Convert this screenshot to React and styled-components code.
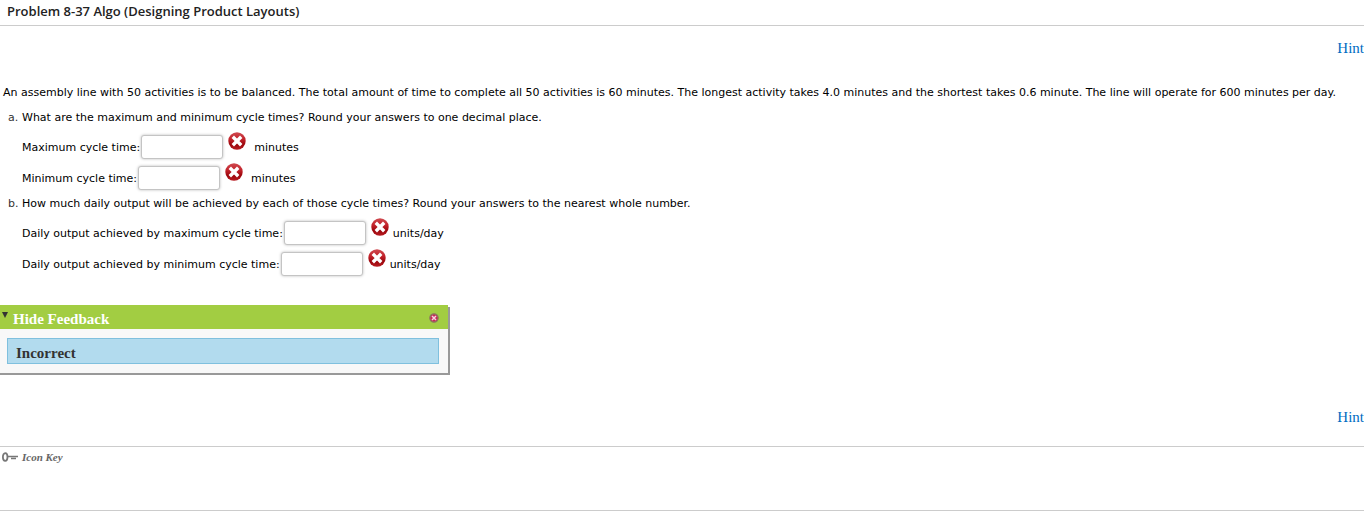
import React from "react";
import styled, { createGlobalStyle } from "styled-components";

const GlobalStyle = createGlobalStyle`
  * {
    box-sizing: border-box;
  }
  body {
    margin: 0;
    background: #fff;
    color: #000;
    font-family: "DejaVu Sans", Verdana, sans-serif;
    font-size: 11px;
    line-height: 16px;
  }
`;

const cycleParts = [
  { id: "max-cycle", label: "Maximum cycle time:", unit: "minutes", wide: true },
  { id: "min-cycle", label: "Minimum cycle time:", unit: "minutes", wide: true },
];

const outputParts = [
  { id: "max-output", label: "Daily output achieved by maximum cycle time:", unit: "units/day" },
  { id: "min-output", label: "Daily output achieved by minimum cycle time:", unit: "units/day" },
];

function WrongIcon() {
  return (
    <WrongMark viewBox="0 0 18 18" role="img" aria-label="Incorrect answer">
      <defs>
        <linearGradient id="wrong-fill" x1="0" y1="0" x2="0" y2="1">
          <stop offset="0" stopColor="#cf4a50" />
          <stop offset="0.4" stopColor="#c2222a" />
          <stop offset="0.7" stopColor="#9c060c" />
          <stop offset="1" stopColor="#b81c22" />
        </linearGradient>
      </defs>
      <circle cx="9" cy="9" r="8.7" fill="url(#wrong-fill)" />
      <path
        d="M6 6 12 12M12 6 6 12"
        stroke="#fff"
        strokeWidth="3.4"
        strokeLinecap="square"
      />
    </WrongMark>
  );
}

function KeyIcon() {
  return (
    <svg width="16" height="10" viewBox="0 0 16 10" aria-hidden="true">
      <ellipse cx="3.2" cy="5" rx="2.3" ry="3.8" fill="none" stroke="#777" strokeWidth="1.8" />
      <path d="M5 4.5H16M9 6.5H14" stroke="#777" strokeWidth="1.4" />
    </svg>
  );
}

function Question({ mark, text, parts }) {
  return (
    <Item>
      <Mark>{mark}</Mark>
      <div>
        <Prompt>{text}</Prompt>
        {parts.map((part) => (
          <Row key={part.id}>
            <label htmlFor={part.id}>{part.label}</label>
            <Answer id={part.id} type="text" />
            <WrongIcon />
            <Unit $wide={part.wide}>{part.unit}</Unit>
          </Row>
        ))}
      </div>
    </Item>
  );
}

function App() {
  return (
    <>
      <GlobalStyle />
      <Header>
        <Title>Problem 8-37 Algo (Designing Product Layouts)</Title>
      </Header>
      <main>
        <HintBar>
          <Hint href="#hints">Hint</Hint>
        </HintBar>
        <Problem>
          <Intro>
            An assembly line with 50 activities is to be balanced. The total amount of time to
            complete all 50 activities is 60 minutes. The longest activity takes 4.0 minutes and
            the shortest takes 0.6 minute. The line will operate for 600 minutes per day.
          </Intro>
          <List>
            <Question
              mark="a."
              text="What are the maximum and minimum cycle times? Round your answers to one decimal place."
              parts={cycleParts}
            />
            <Question
              mark="b."
              text="How much daily output will be achieved by each of those cycle times? Round your answers to the nearest whole number."
              parts={outputParts}
            />
          </List>
        </Problem>
        <Feedback>
          <FeedbackHeader>
            <Toggle type="button" aria-expanded="true">
              <svg width="6" height="6" viewBox="0 0 6 6" aria-hidden="true">
                <path d="M0 0H6L3 6Z" fill="#333" />
              </svg>
              Hide Feedback
            </Toggle>
            <Close type="button" aria-label="Close feedback">
              <svg width="10" height="10" viewBox="0 0 10 10" aria-hidden="true">
                <circle cx="5" cy="5" r="4.2" fill="#c8285a" stroke="#8a7a5c" strokeWidth="1.2" />
                <path d="M3 3 7 7M7 3 3 7" stroke="#f6d5dd" strokeWidth="1.5" />
              </svg>
            </Close>
          </FeedbackHeader>
          <Result>Incorrect</Result>
        </Feedback>
        <HintBar>
          <Hint href="#hints">Hint</Hint>
        </HintBar>
      </main>
      <Footer>
        <IconKey href="#icon-key">
          <KeyIcon />
          Icon Key
        </IconKey>
      </Footer>
    </>
  );
}

const Header = styled.header`
  padding: 1px 7px 4px;
  border-bottom: 1px solid #ccc;
`;

const Title = styled.h1`
  margin: 0;
  color: #222;
  font: 600 13px/20px "Open Sans", sans-serif;
`;

const HintBar = styled.div`
  display: flex;
  justify-content: flex-end;
  padding: 12px 0 19px;
`;

const Hint = styled.a`
  color: #006bc2;
  font: 15px/20px "Liberation Serif", serif;
  text-decoration: none;
`;

const Problem = styled.section`
  padding: 8px 0 0 3px;
`;

const Intro = styled.p`
  margin: 0;
`;

const List = styled.ol`
  margin: 0;
  padding: 9px 0 0;
  list-style: none;
`;

const Item = styled.li`
  display: flex;
  margin-bottom: 2px;
`;

const Mark = styled.span`
  width: 19px;
  padding-left: 5px;
  color: #333;
`;

const Prompt = styled.p`
  margin: 0 0 6px;
`;

const Row = styled.div`
  display: flex;
  align-items: center;
  height: 31px;
`;

const Answer = styled.input`
  width: 82px;
  height: 24px;
  margin: 0 5px 2px 1px;
  padding: 2px 4px;
  border: 1px solid #c4c4c4;
  border-radius: 3px;
  box-shadow: 0 0 3px #bbb;
  font: inherit;
`;

const WrongMark = styled.svg`
  flex: none;
  align-self: flex-start;
  width: 18px;
  height: 18px;
`;

const Unit = styled.span`
  margin-left: ${({ $wide }) => ($wide ? "8px" : "4px")};
`;

const Feedback = styled.section`
  max-width: 448px;
  margin: 25px 0 22px;
  padding-bottom: 9px;
  background: #f8f8f8;
  box-shadow: 0 2px 0 #999, 2px 2px 0 #999;
`;

const FeedbackHeader = styled.div`
  display: flex;
  justify-content: space-between;
  height: 24px;
  padding: 0 9px 0 2px;
  background: #a2cd42;
`;

const Toggle = styled.button`
  display: flex;
  align-items: flex-start;
  gap: 5px;
  padding: 4px 0 0;
  border: 0;
  background: none;
  color: #fff;
  font: bold 15px/20px "Liberation Serif", serif;

  svg {
    margin-top: 3px;
  }
`;

const Close = styled.button`
  display: flex;
  align-items: center;
  padding: 2px 0 0;
  border: 0;
  background: none;
`;

const Result = styled.div`
  margin: 9px 9px 0 7px;
  padding: 4px 8px 0;
  height: 26px;
  border: 1px solid #7fc0de;
  background: #b2dbee;
  color: #333;
  font: bold 15px/20px "Liberation Serif", serif;
`;

const Footer = styled.footer`
  padding: 2px 2px 45px;
  border: solid #ccc;
  border-width: 1px 0;
`;

const IconKey = styled.a`
  display: flex;
  align-items: center;
  gap: 4px;
  width: max-content;
  color: #666;
  font: italic bold 11px/16px "Liberation Serif", serif;
  text-decoration: none;
`;

export default App;
